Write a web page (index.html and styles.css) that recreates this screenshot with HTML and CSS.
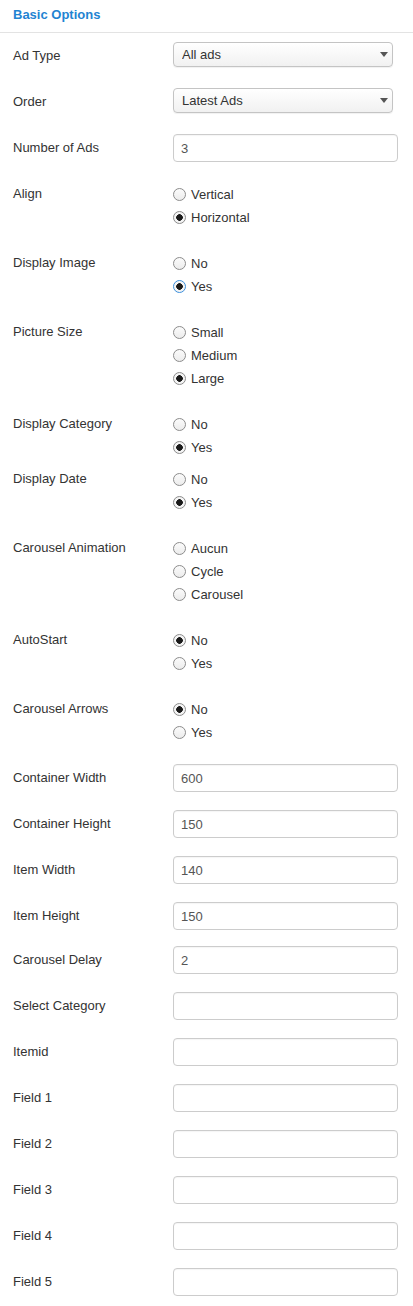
FILE: index.html
```html
<!DOCTYPE html>
<html lang="en">

<head>
    <meta charset="UTF-8">
    <meta name="viewport" content="width=device-width, initial-scale=1.0">
    <title>Basic Options</title>
    <link rel="stylesheet" href="styles.css">
</head>

<body>
    <h3 class="panel-title">Basic Options</h3>

    <form class="options">
        <!-- Ad selection -->
        <div class="control-group">
            <label class="control-label">Ad Type</label>
            <div class="controls">
                <div class="select-wrap">
                    <select>
                        <option>All ads</option>
                    </select>
                    <svg class="caret" width="8" height="5" viewBox="0 0 8 5"><path d="M0 0h8L4 5z" fill="#555"/></svg>
                </div>
            </div>
        </div>

        <div class="control-group">
            <label class="control-label">Order</label>
            <div class="controls">
                <div class="select-wrap">
                    <select>
                        <option>Latest Ads</option>
                    </select>
                    <svg class="caret" width="8" height="5" viewBox="0 0 8 5"><path d="M0 0h8L4 5z" fill="#555"/></svg>
                </div>
            </div>
        </div>

        <div class="control-group">
            <label class="control-label">Number of Ads</label>
            <div class="controls"><input type="text" value="3"></div>
        </div>

        <!-- Display options -->
        <div class="control-group">
            <label class="control-label">Align</label>
            <div class="controls radios">
                <label class="radio"><input type="radio" name="align"> Vertical</label>
                <label class="radio"><input type="radio" name="align" checked> Horizontal</label>
            </div>
        </div>

        <div class="control-group">
            <label class="control-label">Display Image</label>
            <div class="controls radios">
                <label class="radio"><input type="radio" name="image"> No</label>
                <label class="radio"><input type="radio" name="image" class="focused" checked> Yes</label>
            </div>
        </div>

        <div class="control-group">
            <label class="control-label">Picture Size</label>
            <div class="controls radios">
                <label class="radio"><input type="radio" name="size"> Small</label>
                <label class="radio"><input type="radio" name="size"> Medium</label>
                <label class="radio"><input type="radio" name="size" checked> Large</label>
            </div>
        </div>

        <div class="control-group compact">
            <label class="control-label">Display Category</label>
            <div class="controls radios">
                <label class="radio"><input type="radio" name="category"> No</label>
                <label class="radio"><input type="radio" name="category" checked> Yes</label>
            </div>
        </div>

        <div class="control-group">
            <label class="control-label">Display Date</label>
            <div class="controls radios">
                <label class="radio"><input type="radio" name="date"> No</label>
                <label class="radio"><input type="radio" name="date" checked> Yes</label>
            </div>
        </div>

        <!-- Carousel options -->
        <div class="control-group">
            <label class="control-label">Carousel Animation</label>
            <div class="controls radios">
                <label class="radio"><input type="radio" name="animation"> Aucun</label>
                <label class="radio"><input type="radio" name="animation"> Cycle</label>
                <label class="radio"><input type="radio" name="animation"> Carousel</label>
            </div>
        </div>

        <div class="control-group">
            <label class="control-label">AutoStart</label>
            <div class="controls radios">
                <label class="radio"><input type="radio" name="autostart" checked> No</label>
                <label class="radio"><input type="radio" name="autostart"> Yes</label>
            </div>
        </div>

        <div class="control-group">
            <label class="control-label">Carousel Arrows</label>
            <div class="controls radios">
                <label class="radio"><input type="radio" name="arrows" checked> No</label>
                <label class="radio"><input type="radio" name="arrows"> Yes</label>
            </div>
        </div>

        <div class="control-group">
            <label class="control-label">Container Width</label>
            <div class="controls"><input type="text" value="600"></div>
        </div>

        <div class="control-group">
            <label class="control-label">Container Height</label>
            <div class="controls"><input type="text" value="150"></div>
        </div>

        <div class="control-group">
            <label class="control-label">Item Width</label>
            <div class="controls"><input type="text" value="140"></div>
        </div>

        <div class="control-group short">
            <label class="control-label">Item Height</label>
            <div class="controls"><input type="text" value="150"></div>
        </div>

        <div class="control-group">
            <label class="control-label">Carousel Delay</label>
            <div class="controls"><input type="text" value="2"></div>
        </div>

        <div class="control-group">
            <label class="control-label">Select Category</label>
            <div class="controls"><input type="text"></div>
        </div>

        <div class="control-group">
            <label class="control-label">Itemid</label>
            <div class="controls"><input type="text"></div>
        </div>

        <!-- Extra fields -->
        <div class="control-group">
            <label class="control-label">Field 1</label>
            <div class="controls"><input type="text"></div>
        </div>

        <div class="control-group">
            <label class="control-label">Field 2</label>
            <div class="controls"><input type="text"></div>
        </div>

        <div class="control-group">
            <label class="control-label">Field 3</label>
            <div class="controls"><input type="text"></div>
        </div>

        <div class="control-group">
            <label class="control-label">Field 4</label>
            <div class="controls"><input type="text"></div>
        </div>

        <div class="control-group">
            <label class="control-label">Field 5</label>
            <div class="controls"><input type="text"></div>
        </div>
    </form>
</body>

</html>
```

FILE: styles.css
```css
body {
    font-family: "Liberation Sans", Arial, sans-serif;
    font-size: 13px;
    line-height: 18px;
    color: #333;
    background-color: #fff;
    margin: 0;
}

.panel-title {
    margin: 0;
    padding: 6px 13px 8px;
    font-size: 13px;
    line-height: 18px;
    font-weight: bold;
    color: #1f84d2;
    border-bottom: 1px solid #e3e3e3;
}

.options {
    padding: 9px 0 0 13px;
}

.control-group {
    display: flex;
    min-height: 28px;
    margin-bottom: 18px;
}

.control-group.compact {
    margin-bottom: 4px;
}

.control-group.short {
    margin-bottom: 16px;
}

.control-label {
    width: 160px;
    flex-shrink: 0;
    padding-top: 5px;
    line-height: 18px;
}

.controls input[type="text"] {
    box-sizing: border-box;
    width: 225px;
    height: 28px;
    padding: 4px 7px;
    font-family: inherit;
    font-size: 13px;
    color: #555;
    border: 1px solid #ccc;
    border-radius: 4px;
    box-shadow: inset 0 1px 1px rgba(0, 0, 0, 0.04);
    margin: 0;
}

.select-wrap {
    position: relative;
    width: 220px;
}

.select-wrap select {
    appearance: none;
    -webkit-appearance: none;
    box-sizing: border-box;
    width: 220px;
    height: 25px;
    padding: 0 8px;
    font-family: inherit;
    font-size: 13px;
    color: #333;
    border: 1px solid #c4c4c4;
    border-radius: 4px;
    background: linear-gradient(#fff, #f1f1f1);
    box-shadow: 0 1px 1px rgba(0, 0, 0, 0.06);
    margin: 0;
}

.caret {
    position: absolute;
    right: 5px;
    top: 10px;
    pointer-events: none;
}

.radios {
    padding: 3px 0 2px;
}

.radio {
    display: flex;
    align-items: center;
    gap: 5px;
    height: 23px;
}

.radio input {
    appearance: none;
    -webkit-appearance: none;
    width: 13px;
    height: 13px;
    margin: 0;
    border: 1px solid #8c8c8c;
    border-radius: 50%;
    background: linear-gradient(#fbfbfb, #ececec);
    box-sizing: border-box;
}

.radio input:checked {
    background: radial-gradient(circle, #1a1a1a 0 3px, #f4f4f4 3.6px);
}

.radio input.focused {
    border-color: #3b8fdc;
}
```
